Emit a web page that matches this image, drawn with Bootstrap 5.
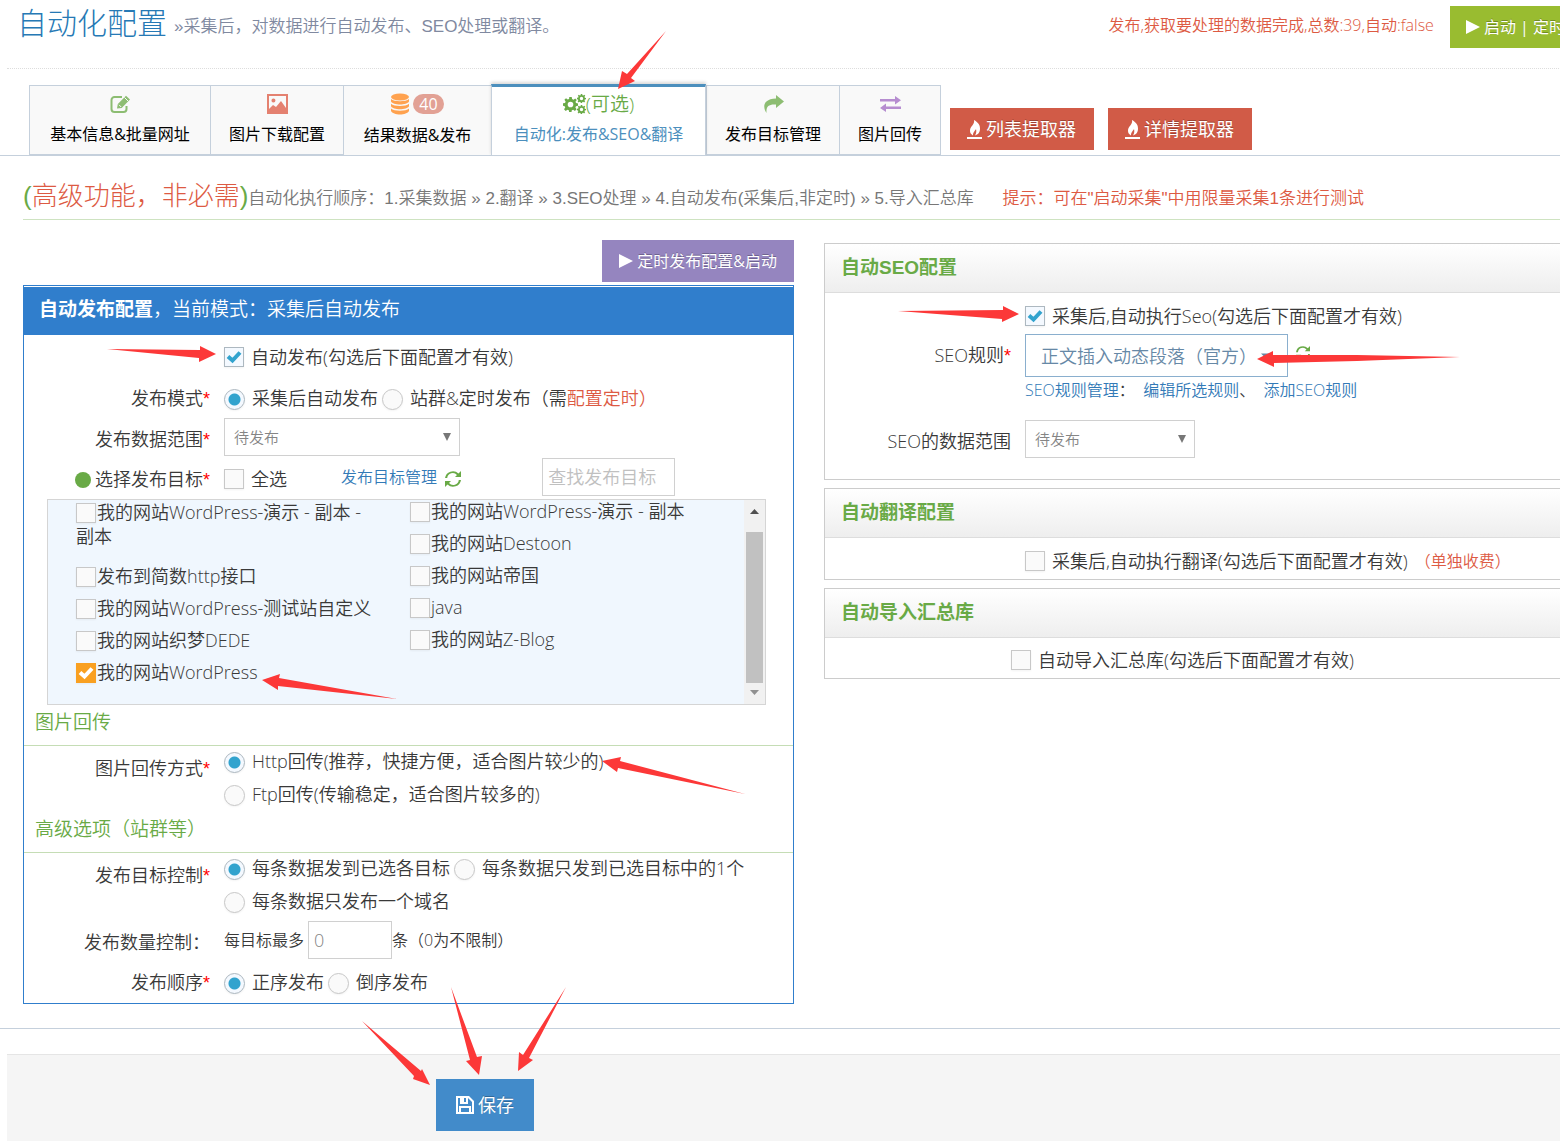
<!DOCTYPE html>
<html lang="zh-CN">
<head>
<meta charset="utf-8">
<meta name="viewport" content="width=device-width, initial-scale=1">
<title>自动化配置</title>
<link rel="stylesheet" href="https://cdn.jsdelivr.net/npm/bootstrap@5.3.0/dist/css/bootstrap.min.css">
<style>
body{font-family:"Open Sans","Noto Sans CJK SC",sans-serif;font-size:18px;font-weight:350;line-height:26px;color:#393939;background:#fff;overflow-x:hidden}
.wide-page{margin-right:-21px;white-space:nowrap}
a{color:#337ab7;text-decoration:none}
.arial-text{font-family:"Liberation Sans","Noto Sans CJK SC",sans-serif}
.fs-15{font-size:15px}.fs-16{font-size:16px}.fs-17{font-size:17px}.fs-19{font-size:19px}
.ink-red{color:#dd5a43}.ink-green{color:#69aa46}
.star{color:#f00;font-family:"Liberation Sans",sans-serif}
svg{display:inline-block;fill:currentColor;flex:none}
.flat-btn{border:0;border-radius:0;color:#fff;height:42px;padding:0 16px;display:inline-flex;align-items:center;gap:4px;text-shadow:0 -1px 0 rgba(0,0,0,.25);font-weight:400}
.flat-btn:hover{color:#fff}
.c-lime{background:#99bc30}.c-brick{background:#d15b47;font-size:18px;margin-top:23px}.c-violet{background:#9585bf}.c-save{background:#428bca}
.flat-btn.c-brick{padding:0 18px 0 17px}
.flat-btn.c-violet{padding:0 17px}
.flat-btn.c-save{height:52px;padding:0 20px;font-size:18px}
.top-head{margin-left:7px;padding-top:6px;height:69px;border-bottom:1px dotted #ddd}
.top-head h1{font-size:30px;line-height:34px;font-weight:300;color:#2679b5;margin:0 7px 0 10px}
.top-head small{color:#8089a0}
.cfg-tabs{padding-left:29px;padding-top:16px;height:87px;border-bottom:1px solid #c5d0dc}
.cfg-tabs .nav-link{height:70px;border:1px solid #c5d0dc;border-right-width:0;border-radius:0;background:#f9f9f9;color:#000;padding:3px 0 0;text-align:center;font-size:16px;font-weight:400;line-height:30px;display:flex;flex-direction:column}
.cfg-tabs .nav-link span.ico{height:30px;display:flex;align-items:center;justify-content:center;opacity:.75}
.cfg-tabs .nav-item:last-child .nav-link{border-right-width:1px}
.cfg-tabs .nav-link.tall{height:71px;line-height:32px}
.cfg-tabs .nav-link.active{margin-top:-1px;height:72px;padding-top:2px;background:#fff;color:#4c8fbd;border-top:3px solid #4c8fbd;border-bottom:1px solid #c5d0dc;border-right:1px solid #c5d0dc;box-shadow:0 -2px 3px rgba(0,0,0,.15);position:relative}
.cfg-tabs .nav-link.active span.ico{opacity:1;font-size:19px;font-weight:350}
.w-a{width:181px}.w-b{width:133px}.w-c{width:148px}.w-d{width:215px}.w-e{width:102px}
.count-pill{background:#e2a195;font-size:16px;line-height:20px;font-weight:400;padding:0 6px;border-radius:10px;color:#fff;margin-left:4px}
.extractors{display:flex;gap:14px;margin-left:9px}
.order-line{margin-left:23px;height:64px;padding-top:21px;border-bottom:1px solid #cee3c1;color:#777}
.order-line h2{font-size:26px;line-height:38px;font-weight:300;margin:0}
.order-line .rest{padding-top:9px}
.main-cols{margin:20px 0 24px 23px}
.side-col{padding:3px 0 0 22px}
.pub-box{border:1px solid #307ecc;padding-top:1px;margin-top:3px}
.pub-head{background:#307ecc;color:#fff;height:48px;line-height:45px;padding-left:15px;font-size:19px}
.pub-head b,.side-head{font-weight:700}
.line-row{display:flex;gap:14px;align-items:center}
.line-row>.lab{width:186px;text-align:right;flex:none}
.h-43{min-height:43px}.h-42{min-height:42px}.h-41{min-height:41px}.h-40{min-height:40px}.h-38{min-height:38px}
.h-33{min-height:33px;padding-bottom:3px}
.lab-44{line-height:44px}
.opt{display:inline-flex;align-items:center;gap:7px}
.opt .form-check-input,.pick .form-check-input{width:20px;height:20px;margin:0;border:1px solid #c8c8c8;border-radius:0;background-color:#fafafa;box-shadow:0 1px 2px rgba(0,0,0,.05);flex:none}
.opt .form-check-input[type=radio]{width:21px;height:21px;border-radius:50%;margin-top:3px}
.opt .form-check-input:checked{border-color:#adb8c0;background-color:#f4f9ff}
.opt .form-check-input[type=checkbox]:checked{background-image:url("data:image/svg+xml,%3Csvg xmlns='http://www.w3.org/2000/svg' viewBox='0 0 20 20'%3E%3Cpath d='M4 9.500l4.500 4 7.500-8' fill='none' stroke='%2332a3ce' stroke-width='4'/%3E%3C/svg%3E");background-size:20px 20px}
.opt .form-check-input[type=radio]:checked{background-image:radial-gradient(circle,#32a3ce 0,#32a3ce 5.500px,transparent 6.500px)}
.flat-select,.flat-input{border:1px solid #d0d0d0;border-radius:0;height:38px;color:#858585;font-size:15px;font-weight:350;line-height:24px;padding:4px 9px}
.flat-select{background-image:url("data:image/svg+xml,%3Csvg xmlns='http://www.w3.org/2000/svg' viewBox='0 0 8 8'%3E%3Cpath d='M0 0h8L4 8z' fill='%23777'/%3E%3C/svg%3E");background-size:8px 8px;background-position:right 8px center}
.flat-input{font-size:18px;padding:4px 5px}
.flat-input::placeholder{color:#c0c0c0}
.rule-select{height:43px;border-color:#8aafce;color:#6688a6;font-size:18px;padding:4px 15px;background-image:url("data:image/svg+xml,%3Csvg xmlns='http://www.w3.org/2000/svg' viewBox='0 0 8 8'%3E%3Cpath d='M0 2h8L4 6z' fill='%236688a6'/%3E%3C/svg%3E");background-size:10px 10px;background-position:right 16px center}
.w-236{width:236px}.w-170{width:170px}.w-133{width:133px}.w-84{width:84px}.w-263{width:263px}
.green-dot{width:16px;height:16px;border-radius:50%;background:#69aa46;display:inline-block;vertical-align:-2px;margin-right:4px}
.search-row{margin-top:2px}
.target-tools{margin-left:40px}
.search-gap{margin-left:67px}
.target-list{margin:3px 27px 0 23px;height:206px;border:1px solid #d5d5d5;background:#f0f7fe;padding-left:28px}
.pick{height:32px;display:block;white-space:normal;padding-right:30px;line-height:22px}
.pick .form-check-input{float:none;vertical-align:-4px;margin-right:1px}
.pick.two-lines{height:65px;line-height:24px}
.pick .form-check-input:checked{border-color:#f9a021;background-color:#f9a021;background-size:20px 20px;background-image:url("data:image/svg+xml,%3Csvg xmlns='http://www.w3.org/2000/svg' viewBox='0 0 20 20'%3E%3Cpath d='M4 9.500l4.500 4 7.500-8' fill='none' stroke='%23fff' stroke-width='4'/%3E%3C/svg%3E")}
.scroll-rail{width:21px;background:#f1f1f1;display:flex;flex-direction:column;align-items:center;color:#505050;padding:9px 0 9px}
.scroll-rail i{width:17px;background:#c1c1c1;flex:1;margin:18px 0 7px}
.sect-title{font-size:19px;line-height:34px;font-weight:350;color:#69aa46;padding:0 0 6px 11px;margin:0;border-bottom:1px solid #c5ddb5}
.side-box{border:1px solid #ccc;margin-bottom:8px}
.side-head{height:49px;line-height:48px;padding-left:16px;margin:0;font-size:19px;color:#69aa46;background:linear-gradient(#fff,#eee);border-bottom:1px solid #ddd}
.last-pick{margin-top:17px;padding-bottom:21px}
.foot-bar{margin-left:7px;margin-top:25px;border-top:1px solid #e5e5e5;background:#f5f5f5;height:87px;padding:24px 0 0 429px}
.bottom-rule{border-top:1px solid #c5d0dc}
.marks{position:absolute;left:0;top:0;width:1560px;height:1141px;pointer-events:none;fill:#fc3838}
</style>
<script src="https://cdn.jsdelivr.net/npm/bootstrap@5.3.0/dist/js/bootstrap.bundle.min.js"></script>
</head>
<body>
<svg width="0" height="0" class="position-absolute" aria-hidden="true">
<symbol id="i-play" viewBox="0 0 14 14"><path d="M0 0l14 7-14 7z"/></symbol>
<symbol id="i-fire" viewBox="0 0 15 19"><path d="M7 0c5 3 6 5.500 6 8.500 0 4-2 6-5 7C9.500 13 9.500 11 9 9c-1 2-3 3-3 6.500C3.500 14 3 12.500 3 10.500 3 6 8 5 7 0zM0 17h15v2H0z"/></symbol>
<symbol id="i-refresh" viewBox="0 0 16 16"><path d="M0 7a8 8 0 0 1 13.500-4.500L16 0v6H10l2-2A5.600 5.600 0 0 0 2.200 7zM16 9a8 8 0 0 1-13.500 4.500L0 16v-6h6l-2 2A5.600 5.600 0 0 0 13.800 9z"/></symbol>
<symbol id="i-gear" viewBox="0 0 16 16"><path fill-rule="evenodd" d="M6.700 0h2.600l.4 2.200 1.500.6L13 1.500 14.700 3.200l-1.400 1.800.6 1.500 2.100.4v2.500l-2.200.4-.6 1.500 1.300 1.800-1.800 1.800-1.800-1.300-1.500.6-.4 2.200H6.600l-.4-2.200-1.500-.6-1.800 1.300-1.800-1.800 1.300-1.800-.6-1.500L0 9.300V6.700l2.200-.4.600-1.500L1.500 3 3.200 1.300 5 2.700l1.500-.6zM8 5a3 3 0 1 0 0 6 3 3 0 0 0 0-6z"/></symbol>
</svg>

<div class="wide-page">
<header class="top-head d-flex justify-content-between align-items-start">
  <div class="d-flex align-items-center">
    <h1>自动化配置</h1><small class="arial-text fs-17 pt-2">»采集后，对数据进行自动发布、SEO处理或翻译。</small>
  </div>
  <div class="d-flex align-items-center">
    <span class="ink-red fs-16 me-3 pb-1">发布,获取要处理的数据完成,总数:39,自动:false</span>
    <button type="button" class="btn flat-btn c-lime fs-16"><svg width="14" height="14"><use href="#i-play"/></svg>启动 | 定时</button>
  </div>
</header>

<nav class="cfg-tabs d-flex align-items-start">
  <ul class="nav flex-nowrap">
    <li class="nav-item w-a"><a class="nav-link" href="#"><span class="ico ink-green"><svg width="21" height="18" viewBox="0 0 21 18"><path d="M12 2H4.500A3 3 0 0 0 1.500 5v9a3 3 0 0 0 3 3h9a3 3 0 0 0 3-3v-3" fill="none" stroke="currentColor" stroke-width="2"/><path d="M7 13.500l.8-4.500L16 .8l4 3.800-8.300 8.400z"/><path d="M9 9.800l2.200 2.200M14.500 2.500l3.700 3.700" stroke="#f9f9f9" stroke-width="1"/></svg></span>基本信息&amp;批量网址</a></li>
    <li class="nav-item w-b"><a class="nav-link" href="#"><span class="ico"><svg width="21" height="20" viewBox="0 0 21 20" style="color:#dd5a43"><path fill-rule="evenodd" d="M0 0h21v20H0zM2 2v13l4-4 3 2 5-6 5 7V2zM6.500 4.500a2 2 0 1 1-.1 4 2 2 0 0 1 .1-4z"/></svg></span>图片下载配置</a></li>
    <li class="nav-item w-c"><a class="nav-link tall" href="#"><span class="ico opacity-100"><svg width="18" height="22" viewBox="0 0 18 21" style="color:#ffa24f"><ellipse cx="9" cy="3.500" rx="9" ry="3.500"/><path d="M0 5.500c3 3 15 3 18 0V8c-2 4-16 4-18 0zM0 10.300c3 3 15 3 18 0v2.500c-2 4-16 4-18 0zM0 15.100c3 3 15 3 18 0v2.400c-2 4.600-16 4.600-18 0z"/></svg><span class="count-pill">40</span></span>结果数据&amp;发布</a></li>
    <li class="nav-item w-d"><a class="nav-link active" href="#"><span class="ico ink-green"><svg width="23" height="20" viewBox="0 0 23 20"><use href="#i-gear" x="0" y="3" width="15" height="15"/><use href="#i-gear" x="14" y="0" width="9" height="9"/><use href="#i-gear" x="14" y="11" width="9" height="9"/></svg>(可选)</span>自动化:发布&amp;SEO&amp;翻译</a></li>
    <li class="nav-item w-b"><a class="nav-link" href="#"><span class="ico ink-green"><svg width="21" height="18" viewBox="0 0 21 18"><path d="M13 0l8 6.500-8 6.500V9.500C6 9 3 11 3.500 18 0 13-1 4 13 3.500z"/></svg></span>发布目标管理</a></li>
    <li class="nav-item w-e"><a class="nav-link" href="#"><span class="ico"><svg width="21" height="16" viewBox="0 0 21 16" style="color:#a069c3"><path d="M0 3h15V0l6 4.300-6 4.200V5.500H0zM21 10.500H6v-3L0 12l6 4v-3h15z"/></svg></span>图片回传</a></li>
  </ul>
  <div class="extractors">
    <button type="button" class="btn flat-btn c-brick"><svg width="15" height="19"><use href="#i-fire"/></svg>列表提取器</button>
    <button type="button" class="btn flat-btn c-brick"><svg width="15" height="19"><use href="#i-fire"/></svg>详情提取器</button>
  </div>
</nav>

<div class="order-line arial-text d-flex">
  <h2 class="ink-green arial-text">(<span class="ink-red">高级功能，非必需</span>)</h2>
  <div class="rest fs-17">自动化执行顺序：1.采集数据 » 2.翻译 » 3.SEO处理 » 4.自动发布(采集后,非定时) » 5.导入汇总库 <span class="ink-red ms-4">提示：可在"启动采集"中用限量采集1条进行测试</span></div>
</div>

<main class="row g-0 main-cols">
  <section class="col-6 pe-2">
    <div class="text-end"><button type="button" class="btn flat-btn c-violet fs-16"><svg width="14" height="14"><use href="#i-play"/></svg>定时发布配置&amp;启动</button></div>
    <form class="pub-box">
      <div class="pub-head"><b>自动发布配置</b>，当前模式：采集后自动发布</div>
      <div class="line-row h-43"><span class="lab"></span><label class="opt"><input class="form-check-input" type="checkbox" checked>自动发布(勾选后下面配置才有效)</label></div>
      <div class="line-row h-40"><span class="lab">发布模式<span class="star">*</span></span>
        <div class="d-flex gap-1"><label class="opt"><input class="form-check-input" type="radio" name="mode" checked>采集后自动发布</label><label class="opt"><input class="form-check-input" type="radio" name="mode"><span>站群&amp;定时发布（需<a href="#" class="ink-red">配置定时）</a></span></label></div></div>
      <div class="line-row h-38"><label class="lab pt-1" for="range">发布数据范围<span class="star">*</span></label><select id="range" class="form-select flat-select w-236"><option>待发布</option></select></div>
      <div class="line-row h-38 search-row"><span class="lab pt-1"><span class="green-dot"></span>选择发布目标<span class="star">*</span></span>
        <label class="opt pt-1"><input class="form-check-input" type="checkbox">全选</label>
        <a href="#" class="fs-16 target-tools">发布目标管理 <svg class="ink-green ms-1" width="16" height="16"><use href="#i-refresh"/></svg></a>
        <input type="text" class="form-control flat-input w-133 search-gap" placeholder="查找发布目标" aria-label="查找发布目标"></div>
      <div class="target-list d-flex">
        <div class="row g-0 flex-fill">
          <div class="col-6">
            <label class="pick two-lines"><input class="form-check-input" type="checkbox">我的网站WordPress-演示 - 副本 - 副本</label>
            <label class="pick"><input class="form-check-input" type="checkbox">发布到简数http接口</label>
            <label class="pick"><input class="form-check-input" type="checkbox">我的网站WordPress-测试站自定义</label>
            <label class="pick"><input class="form-check-input" type="checkbox">我的网站织梦DEDE</label>
            <label class="pick"><input class="form-check-input" type="checkbox" checked>我的网站WordPress</label>
          </div>
          <div class="col-6">
            <label class="pick"><input class="form-check-input" type="checkbox">我的网站WordPress-演示 - 副本</label>
            <label class="pick"><input class="form-check-input" type="checkbox">我的网站Destoon</label>
            <label class="pick"><input class="form-check-input" type="checkbox">我的网站帝国</label>
            <label class="pick"><input class="form-check-input" type="checkbox">java</label>
            <label class="pick"><input class="form-check-input" type="checkbox">我的网站Z-Blog</label>
          </div>
        </div>
        <div class="scroll-rail" aria-hidden="true"><svg width="9" height="5" viewBox="0 0 9 5"><path d="M0 5l4.500-5L9 5z"/></svg><i></i><svg width="9" height="5" viewBox="0 0 9 5" opacity=".6"><path d="M0 0l4.500 5L9 0z"/></svg></div>
      </div>
      <h3 class="sect-title">图片回传</h3>
      <div class="line-row align-items-start"><span class="lab lab-44">图片回传方式<span class="star">*</span></span>
        <div class="d-flex flex-column"><label class="opt h-33"><input class="form-check-input" type="radio" name="img" checked>Http回传(推荐，快捷方便，适合图片较少的)</label><label class="opt h-33"><input class="form-check-input" type="radio" name="img">Ftp回传(传输稳定，适合图片较多的)</label></div></div>
      <h3 class="sect-title">高级选项（站群等）</h3>
      <div class="line-row align-items-start"><span class="lab lab-44">发布目标控制<span class="star">*</span></span>
        <div class="d-flex flex-column align-items-start"><div class="d-flex gap-1"><label class="opt h-33"><input class="form-check-input" type="radio" name="ctl" checked>每条数据发到已选各目标</label><label class="opt h-33"><input class="form-check-input" type="radio" name="ctl">每条数据只发到已选目标中的1个</label></div><label class="opt h-33"><input class="form-check-input" type="radio" name="ctl">每条数据只发布一个域名</label></div></div>
      <div class="line-row h-42"><label class="lab pt-1" for="num">发布数量控制：</label><div class="d-flex align-items-center fs-16"><span class="me-1">每目标最多</span><input id="num" type="text" class="form-control flat-input w-84" value="0">条（0为不限制）</div></div>
      <div class="line-row h-42"><span class="lab">发布顺序<span class="star">*</span></span><div class="d-flex gap-1"><label class="opt"><input class="form-check-input" type="radio" name="ord" checked>正序发布</label><label class="opt"><input class="form-check-input" type="radio" name="ord">倒序发布</label></div></div>
    </form>
  </section>

  <section class="col-6 side-col">
    <form class="side-box">
      <h3 class="side-head arial-text">自动SEO配置</h3>
      <div class="line-row h-41 pt-1"><span class="lab"></span><label class="opt"><input class="form-check-input" type="checkbox" checked>采集后,自动执行Seo(勾选后下面配置才有效)</label></div>
      <div class="line-row"><label class="lab" for="rule">SEO规则<span class="star">*</span></label><div class="d-flex"><select id="rule" class="form-select flat-select rule-select w-263"><option>正文插入动态段落（官方）</option></select><svg class="ink-green ms-2 mt-2" width="14" height="22" viewBox="0 0 16 16"><use href="#i-refresh"/></svg></div></div>
      <div class="line-row fs-16"><span class="lab"></span><span><a href="#">SEO规则管理</a>：&nbsp; <a href="#">编辑所选规则</a>、&nbsp; <a href="#">添加SEO规则</a></span></div>
      <div class="line-row last-pick"><label class="lab pt-1" for="srange">SEO的数据范围</label><select id="srange" class="form-select flat-select w-170"><option>待发布</option></select></div>
    </form>
    <form class="side-box">
      <h3 class="side-head arial-text">自动翻译配置</h3>
      <div class="line-row h-41 pt-1"><span class="lab"></span><label class="opt"><input class="form-check-input" type="checkbox">采集后,自动执行翻译(勾选后下面配置才有效)<span class="ink-red fs-16">（单独收费）</span></label></div>
    </form>
    <form class="side-box mb-0">
      <h3 class="side-head arial-text">自动导入汇总库</h3>
      <div class="line-row h-40 pt-1 gap-0"><span class="lab"></span><label class="opt"><input class="form-check-input" type="checkbox">自动导入汇总库(勾选后下面配置才有效)</label></div>
    </form>
  </section>
</main>
<div class="bottom-rule"></div>
<footer class="foot-bar"><button type="button" class="btn flat-btn c-save"><svg width="18" height="18" viewBox="0 0 18 18"><path fill-rule="evenodd" d="M0 0h13l5 5v13H0zM2 2v14h1v-6h12v6h1V6l-4-4v6H4V2zM8 2v4h2V2zM5 12v4h8v-4z"/></svg>保存</button></footer>
</div>

<svg class="marks" viewBox="0 0 1560 1141" aria-hidden="true">
<path d="M618 89l4-18 5 3 39-43-35 47 4 3z"/>
<path d="M107 349l93 1v-4l16 8-17 8v-4z"/>
<path d="M262 680l18-6-1 4 118 21-119-13v4z"/>
<path d="M602 761l19-4-1 4 125 33-127-26-1 4z"/>
<path d="M362 1021l59 50 1-2 8 16-17-6 1-3z"/>
<path d="M451 987l26 70 5-1-3 19-13-14 4-1z"/>
<path d="M566 987l-37 71 4 2-15 11 1-19 4 3z"/>
<path d="M898 311l105-1v-4l16 8-17 8v-3z"/>
<path d="M1257 359l16-8v4h84l103 2-103 4-83 2v4z"/>
</svg>
</body>
</html>
